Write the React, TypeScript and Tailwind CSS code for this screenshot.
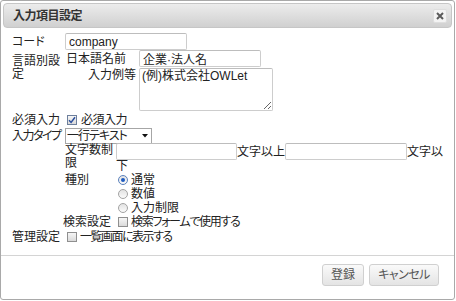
import React from "react";

function Checkbox({ checked }: { checked?: boolean }) {
  return (
    <span
      className={
        "inline-flex w-[10px] h-[10px] shrink-0 items-center justify-center border bg-gradient-to-b from-[#f6f6f6] to-[#dadada] " +
        (checked ? "border-[#6d7f9c]" : "border-[#8f8f8f]")
      }
    >
      {checked && (
        <svg width="8" height="8" viewBox="0 0 8 8">
          <path d="M1 4.2 L3.1 6.4 L7 1.2" stroke="#2b4f9e" strokeWidth="1.5" fill="none" />
        </svg>
      )}
    </span>
  );
}

function Radio({ checked }: { checked?: boolean }) {
  return (
    <span
      className={
        "inline-flex w-[10px] h-[10px] shrink-0 items-center justify-center rounded-full border bg-gradient-to-b from-[#e2e2e2] to-[#fbfbfb] " +
        (checked ? "border-[#5b82bd]" : "border-[#a3a3a3]")
      }
    >
      {checked && <span className="w-[4px] h-[4px] rounded-full bg-[#1f5cc0]" />}
    </span>
  );
}

function TextInput({ w, value }: { w: string; value?: string }) {
  return (
    <input
      readOnly
      value={value ?? ""}
      className={
        w +
        " h-[17px] border border-[#cdcdcd] border-t-[#bdbdbd] rounded-[2px] px-[3px] text-[12px] text-[#222] bg-white outline-none [font-feature-settings:'palt']"
      }
    />
  );
}

export default function App() {
  return (
    <div className="w-[456px] h-[301px] bg-white text-[12px] text-[#222] font-[family-name:'Liberation_Sans','Noto_Sans_CJK_JP',sans-serif] [font-feature-settings:'palt']">
      <div className="w-[455px] h-[300px] border border-[#a9a9a9] rounded-[3px] flex flex-col bg-white">
        {/* title bar */}
        <div className="px-[2px] pt-[2px]">
          <div className="h-[25px] border border-[#c6c6c6] rounded-[4px] bg-gradient-to-b from-[#ececec] to-[#d0d0d0] flex items-center justify-between pl-[9px] pr-[4px]">
            <span className="font-bold text-[#333] leading-[14px] tracking-[-0.5px]">入力項目設定</span>
            <span className="w-[14px] h-[14px] bg-[#f3f3f3] border border-[#dedede] rounded-[2px] flex items-center justify-center">
              <svg width="8" height="8" viewBox="0 0 8 8">
                <path d="M1 1 L7 7 M7 1 L1 7" stroke="#5a5a5a" strokeWidth="2" />
              </svg>
            </span>
          </div>
        </div>

        {/* content */}
        <div className="h-[227px] pl-[11px] pt-[5px] leading-[14px]">
          {/* コード */}
          <div className="flex items-center h-[17px]">
            <div className="w-[53px] whitespace-nowrap">コード</div>
            <TextInput w="w-[122px]" value="company" />
          </div>

          {/* 言語別設定 */}
          <div className="flex">
            <div className="w-[53px] pt-[5px] leading-[13px]">言語別設定</div>
            <div className="flex flex-col">
              <div className="flex items-center h-[17px]">
                <div className="w-[74px] pl-[1px] whitespace-nowrap">日本語名前</div>
                <TextInput w="w-[122px]" value="企業·法人名" />
              </div>
              <div className="flex mt-[1px]">
                <div className="w-[74px] text-right pr-[3px] whitespace-nowrap">入力例等</div>
                <textarea
                  readOnly
                  value="(例)株式会社OWLet"
                  className="w-[134px] h-[43px] border border-[#cdcdcd] border-t-[#bdbdbd] rounded-[2px] px-[2px] pt-0 text-[12px] leading-[14px] text-[#222] outline-none resize-y [font-feature-settings:'palt']"
                />
              </div>
            </div>
          </div>

          {/* 必須入力 */}
          <div className="flex items-center h-[14px] mt-[2px]">
            <div className="w-[53px] whitespace-nowrap">必須入力</div>
            <div className="flex items-center gap-[4px] ml-[2px]">
              <Checkbox checked />
              <span className="tracking-[-0.5px]">必須入力</span>
            </div>
          </div>

          {/* 入力タイプ */}
          <div className="flex mt-[1px]">
            <div className="w-[53px] h-[16px] flex items-center whitespace-nowrap tracking-[-1.5px]">入力タイプ</div>
            <div className="flex flex-col">
              <div className="w-[87px] h-[16px] border border-[#a6a6a6] flex items-center justify-between pl-[1px] pr-[3px] bg-white">
                <span className="whitespace-nowrap tracking-[-1px]">一行テキスト</span>
                <svg width="6" height="4" viewBox="0 0 6 4">
                  <path d="M0 0 H6 L3 3.5 Z" fill="#111" />
                </svg>
              </div>

              {/* 文字数制限 */}
              <div className="flex -mt-[1px]">
                <div className="w-[51px] pt-[1px] leading-[13px]">文字数制限</div>
                <div className="flex flex-col">
                  <div className="flex items-center h-[17px] whitespace-nowrap">
                    <TextInput w="w-[121px]" />
                    <span>文字以上</span>
                    <TextInput w="w-[122px]" />
                    <span>文字以</span>
                  </div>
                  <div className="leading-[13px]">下</div>
                </div>
              </div>

              {/* 種別 */}
              <div className="flex">
                <div className="w-[51px] h-[14px] flex items-center">種別</div>
                <div className="flex flex-col ml-[2px]">
                  <div className="flex items-center gap-[3px] h-[14px]">
                    <Radio checked />
                    <span>通常</span>
                  </div>
                  <div className="flex items-center gap-[3px] h-[14px]">
                    <Radio />
                    <span>数値</span>
                  </div>
                  <div className="flex items-center gap-[3px] h-[14px]">
                    <Radio />
                    <span>入力制限</span>
                  </div>
                </div>
              </div>

              {/* 検索設定 */}
              <div className="flex items-center h-[14px]">
                <div className="w-[53px] -ml-[2px] whitespace-nowrap">検索設定</div>
                <div className="flex items-center gap-[3px] ml-[2px]">
                  <Checkbox />
                  <span className="whitespace-nowrap tracking-[-1.3px]">検索フォームで使用する</span>
                </div>
              </div>
            </div>
          </div>

          {/* 管理設定 */}
          <div className="flex items-center h-[14px] mt-[1px]">
            <div className="w-[53px] whitespace-nowrap">管理設定</div>
            <div className="flex items-center gap-[3px] ml-[2px]">
              <Checkbox />
              <span className="whitespace-nowrap tracking-[-1.5px]">一覧画面に表示する</span>
            </div>
          </div>
        </div>

        {/* button pane */}
        <div className="flex-1 border-t border-[#d4d4d4] flex justify-end items-start pt-[8px] pr-[15px] gap-[5px]">
          <button className="w-[42px] h-[22px] border border-[#d0d0d0] rounded-[3px] bg-gradient-to-b from-[#fafafa] to-[#e4e4e4] text-[12px] text-[#555] leading-[14px]">
            登録
          </button>
          <button className="w-[70px] h-[22px] border border-[#d0d0d0] rounded-[3px] bg-gradient-to-b from-[#fafafa] to-[#e4e4e4] text-[12px] text-[#555] leading-[14px] tracking-[-0.5px]">
            キャンセル
          </button>
        </div>
      </div>
    </div>
  );
}
